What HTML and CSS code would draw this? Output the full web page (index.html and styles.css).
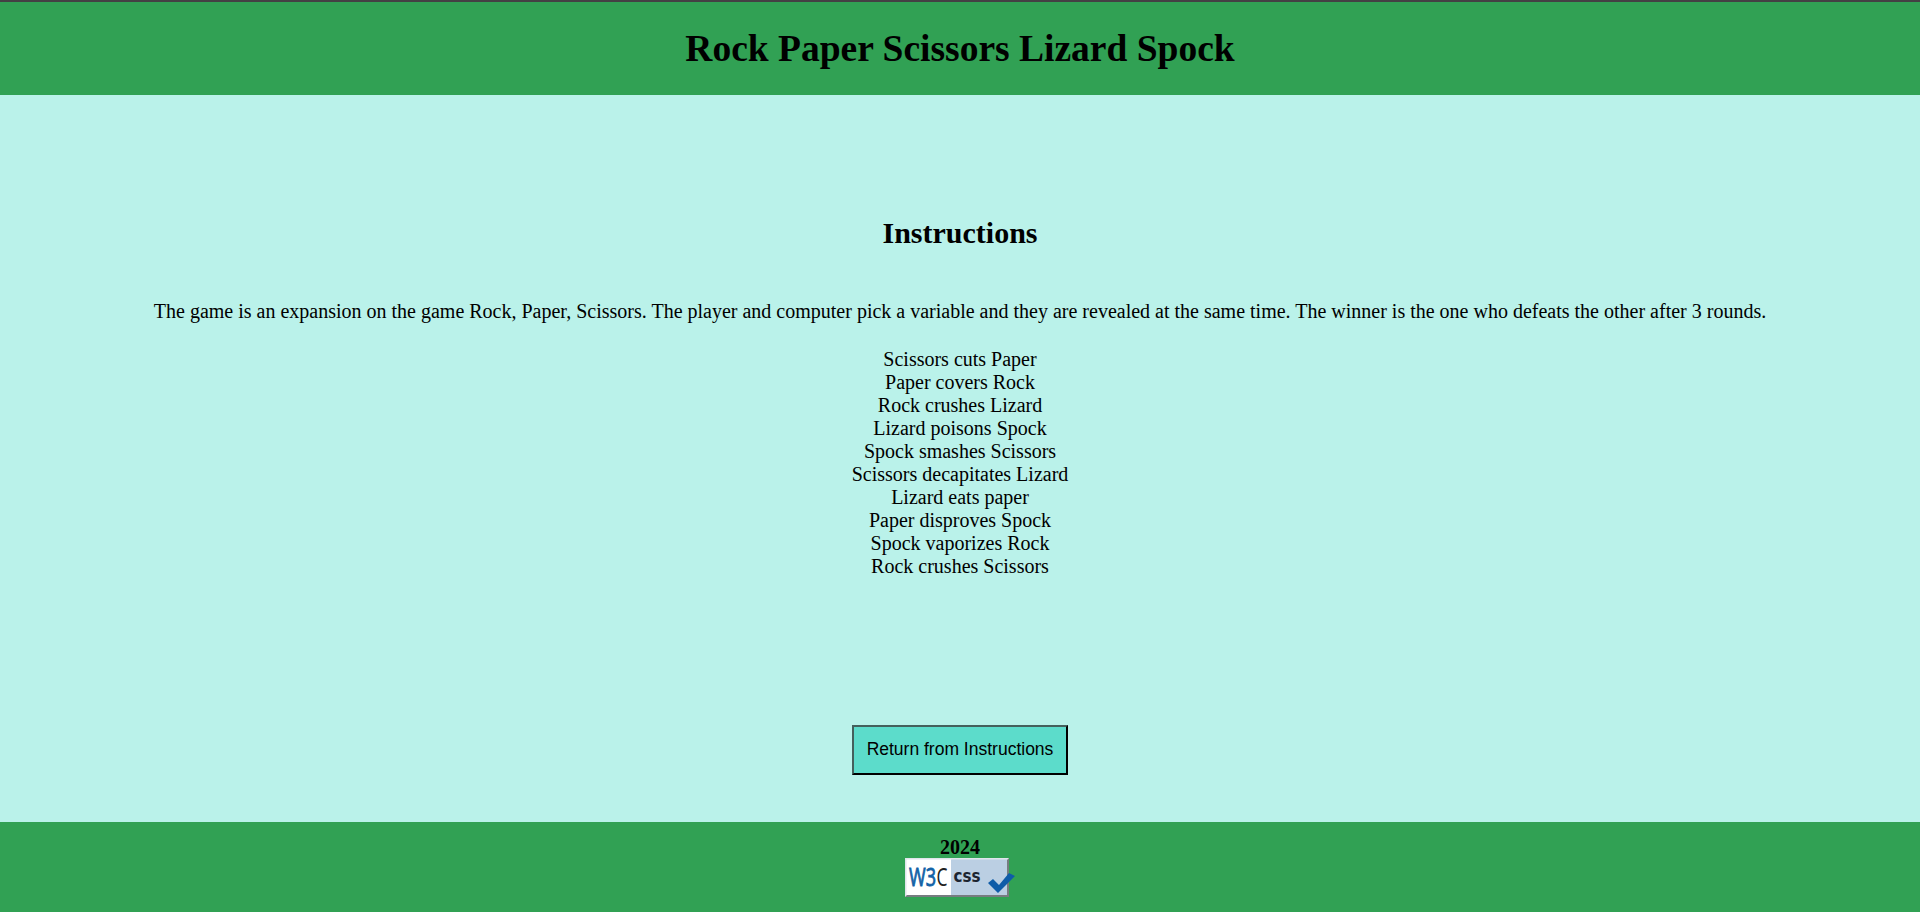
FILE: index.html
```html
<!DOCTYPE html>
<html lang="en">
<head>
<meta charset="utf-8">
<title>Rock Paper Scissors Lizard Spock</title>
<link rel="stylesheet" href="styles.css">
</head>
<body>
<header class="header"><h1 class="title">Rock Paper Scissors Lizard Spock</h1></header>
<main class="main">
<h2 class="heading">Instructions</h2>
<p class="intro">The game is an expansion on the game Rock, Paper, Scissors. The player and computer pick a variable and they are revealed at the same time. The winner is the one who defeats the other after 3 rounds.</p>
<ul class="rules">
<li>Scissors cuts Paper</li>
<li>Paper covers Rock</li>
<li>Rock crushes Lizard</li>
<li>Lizard poisons Spock</li>
<li>Spock smashes Scissors</li>
<li>Scissors decapitates Lizard</li>
<li>Lizard eats paper</li>
<li>Paper disproves Spock</li>
<li>Spock vaporizes Rock</li>
<li>Rock crushes Scissors</li>
</ul>
<button class="return">Return from Instructions</button>
</main>
<footer class="footer">
<span class="year">2024</span>
<svg class="badge" width="110" height="40" viewBox="0 0 110 40">
<rect x="0" y="0" width="104" height="39" fill="#777c80"/>
<path d="M0 0H104L102 2V37H2L0 39Z" fill="#dfe5ea"/>
<rect x="1.5" y="1.5" width="45" height="35.5" fill="#fff"/>
<rect x="46" y="1.500" width="56" height="35.500" fill="#bbcfe3"/>
<text class="w3" x="4" y="28" textLength="27" lengthAdjust="spacingAndGlyphs">W3</text>
<text class="c" x="31.500" y="28" textLength="11" lengthAdjust="spacingAndGlyphs">C</text>
<text class="css" x="48.500" y="23.500" textLength="27" lengthAdjust="spacingAndGlyphs">css</text>
<path d="M83 25L88 21L94 27L104 15L110 18L93 35Z" fill="#0e5ca8"/>
</svg>
</footer>
</body>
</html>
```
FILE: styles.css
```css
* { box-sizing: border-box; }
body {
  margin: 0;
  height: 912px;
  display: flex;
  flex-direction: column;
  background: #baf2ea;
  color: #000;
  font: 20px/23px "Liberation Serif", serif;
  text-align: center;
}
.header {
  height: 95px;
  padding-top: 24px;
  border-top: 2px solid #444044;
  background: #31a154;
}
.title { margin: 0; font-size: 37.5px; line-height: 46px; }
.main {
  height: 727px;
  display: flex;
  flex-direction: column;
  align-items: center;
}
.heading { margin: 120px 0 0; font-size: 30px; line-height: 35px; }
.intro { margin: 50px 0 0; white-space: nowrap; }
.rules { margin: 25px 0 0; padding: 0; list-style: none; }
.return {
  width: 216px;
  height: 50px;
  margin-top: 147px;
  padding: 0 0 2px;
  border: 2px solid;
  border-color: #44605c #000 #000 #44605c;
  background: #5cdccb;
  color: #000;
  font: 17.5px "Liberation Sans", sans-serif;
  white-space: nowrap;
}
.footer {
  height: 90px;
  padding-top: 13px;
  display: flex;
  flex-direction: column;
  align-items: center;
  background: #31a154;
}
.year { height: 23px; line-height: 25px; font-weight: bold; }
.badge { display: block; flex: none; }
.w3 { font: 26px "Open Sans", sans-serif; fill: #1262a6; stroke: #1262a6; stroke-width: .9px; }
.c { font: 26px "Open Sans", sans-serif; fill: #222; }
.css { font: bold 18px "DejaVu Sans", sans-serif; fill: #1b2430; }
```
